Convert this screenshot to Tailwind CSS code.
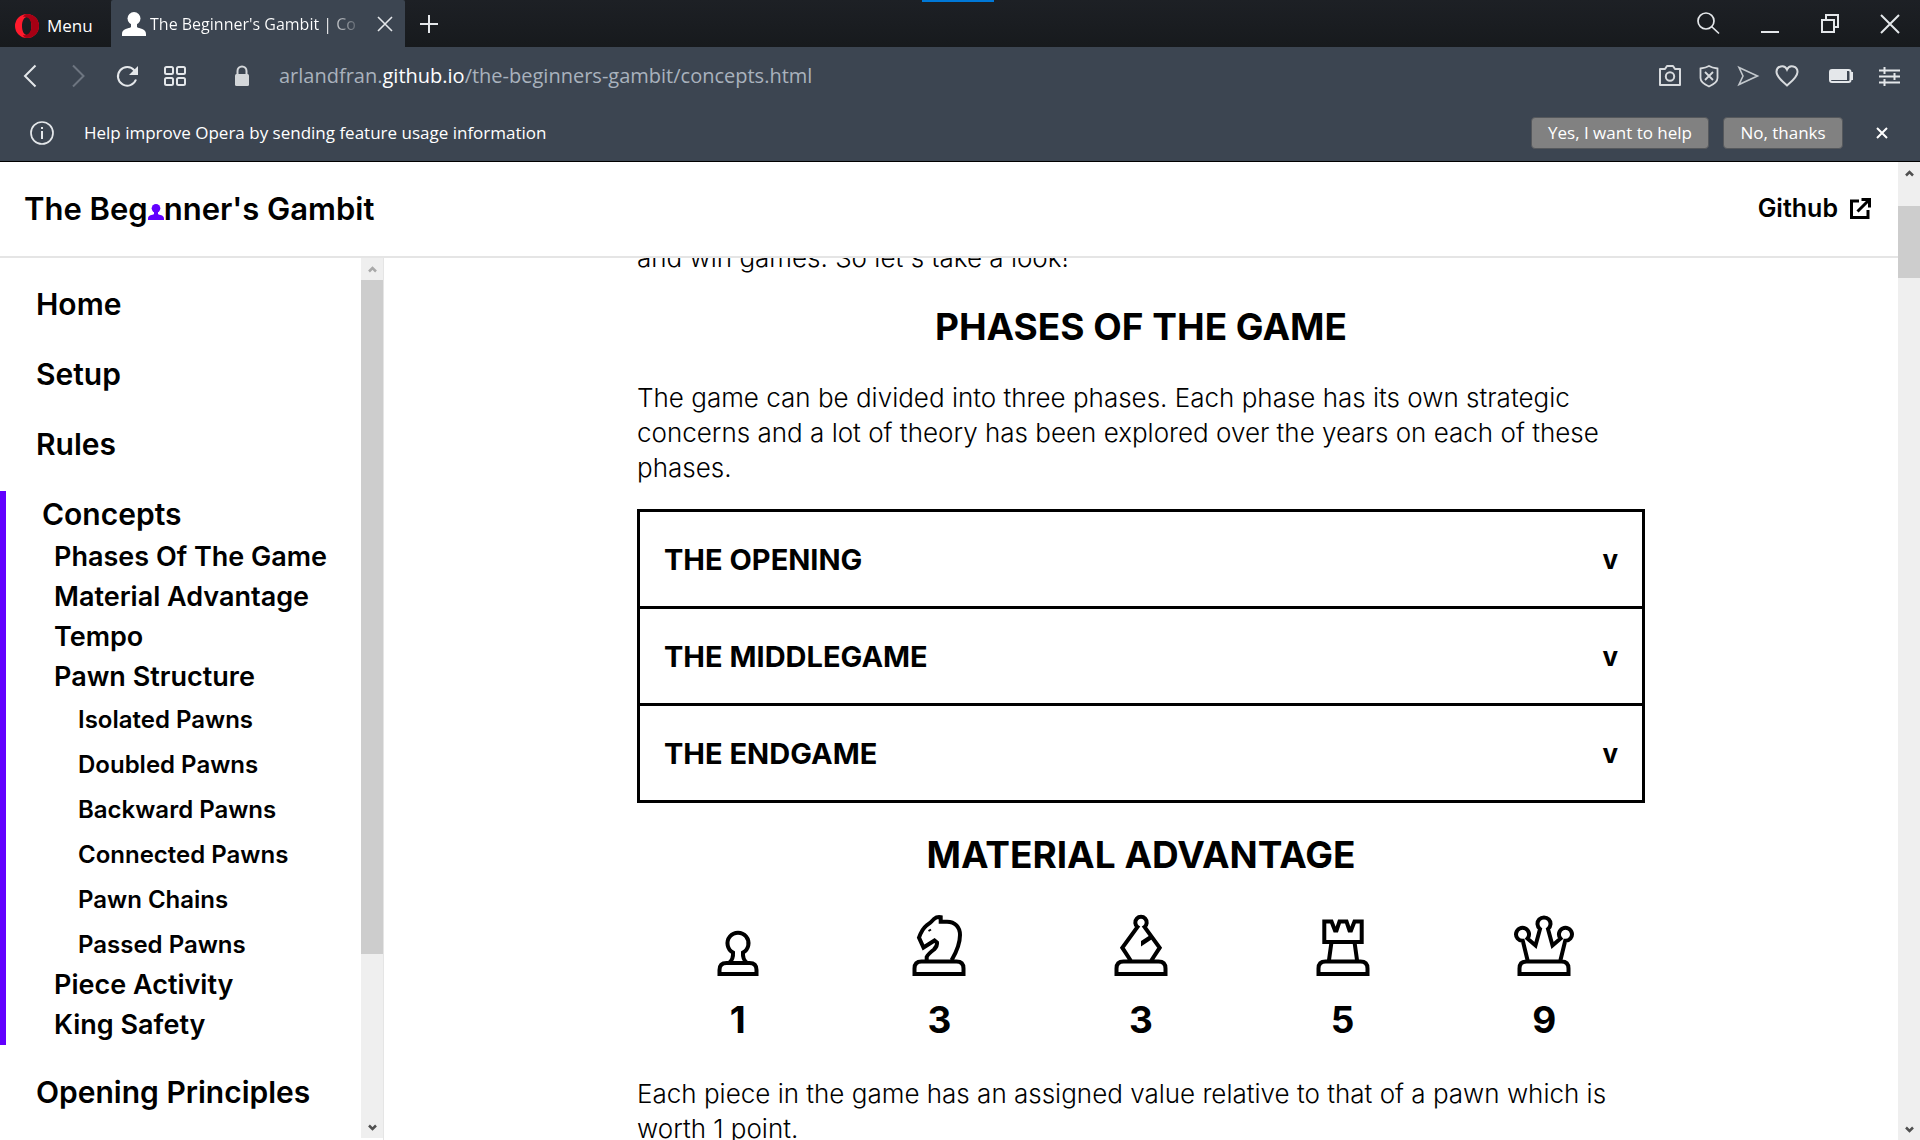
<!DOCTYPE html>
<html lang="en">
<head>
<meta charset="utf-8">
<title>The Beginner's Gambit | Concepts</title>
<script src="https://cdn.jsdelivr.net/npm/@tailwindcss/browser@4"></script>
</head>
<body class="flex h-screen flex-col overflow-hidden bg-white font-['Inter',sans-serif] text-black">

<!-- Browser chrome -->
<div class="shrink-0 border-b border-black bg-[#3c4551] font-['Open_Sans',sans-serif] text-white">
  <div class="relative flex h-[47px] items-stretch bg-linear-to-b from-[#1d2025] to-[#171a1d]">
    <div class="absolute top-0 left-[48%] h-[2px] w-[72px] bg-[#0078d7]"></div>
    <button class="flex w-[111px] items-center gap-2 pt-1 pl-[15px] text-[17px]">
      <svg class="size-6" viewBox="0 0 24 24"><path fill="#ff1b2d" fill-rule="evenodd" d="M12 0a12 12 0 1 0 0 24a12 12 0 1 0 0-24M12 3c3 0 4.500 4 4.500 9s-1.500 9-4.500 9s-5-4-5-9s2-9 5-9"/><path fill="#a70014" d="M12 0a12 12 0 0 1 0 24c-2 0-3-1-4-3c5 1 8.500-3 8.500-9s-3.500-10-8.500-9c1-2 2-3 4-3"/></svg>
      Menu
    </button>
    <div class="flex w-[294px] items-center rounded-t-xs bg-[#3c4551] pr-3 pl-[11px]">
      <svg class="size-6 shrink-0" viewBox="0 0 24 24" fill="#fff"><circle cx="12" cy="6.500" r="6.500"/><path d="M9 10h6v5c2 2 9 1 9 7v2H0v-2c0-6 7-5 9-7z"/></svg>
      <span class="ml-1 bg-linear-to-r from-white from-85% to-white/20 bg-clip-text text-[16px] whitespace-nowrap text-transparent">The Beginner's Gambit | Co</span>
      <button class="ml-auto" aria-label="Close tab"><svg class="size-4" viewBox="0 0 16 16" stroke="#e4e7ea" stroke-width="1.600"><path d="M1 1l14 14M15 1L1 15"/></svg></button>
    </div>
    <button class="ml-[14px] w-[20px]" aria-label="New tab"><svg class="size-5" viewBox="0 0 20 20" stroke="#e4e7ea" stroke-width="2"><path d="M10 1v18M1 10h18"/></svg></button>
    <div class="ml-auto flex items-center gap-[40px] pr-5">
      <button aria-label="Search tabs"><svg class="size-6" viewBox="0 0 24 24" fill="none" stroke="#e4e7ea" stroke-width="1.700"><circle cx="10" cy="9" r="8"/><path d="M15.500 14.500L23 21.500"/></svg></button>
      <button aria-label="Minimize"><svg class="size-[20px]" viewBox="0 0 20 20" stroke="#e4e7ea" stroke-width="2"><path d="M1 18h18"/></svg></button>
      <button aria-label="Restore"><svg class="size-[20px]" viewBox="0 0 20 20" fill="none" stroke="#e4e7ea" stroke-width="2"><path d="M2 6h12v12H2zM6 6V1h12v12h-4"/></svg></button>
      <button aria-label="Close"><svg class="size-[20px]" viewBox="0 0 20 20" stroke="#e4e7ea" stroke-width="2"><path d="M1 1l18 18M19 1L1 19"/></svg></button>
    </div>
  </div>

  <div class="flex h-[58px] items-center pr-[20px] pl-[22px]">
    <div class="flex items-center gap-[23px]">
      <button aria-label="Back"><svg class="size-6" viewBox="0 0 24 24" fill="none" stroke="#e4e7ea" stroke-width="2"><path d="M13.500 1.500L3 12l10.500 10.500"/></svg></button>
      <button aria-label="Forward"><svg class="size-6" viewBox="0 0 24 24" fill="none" stroke="#6d7580" stroke-width="2"><path d="M4 1.500L14.500 12L4 22.500"/></svg></button>
      <button aria-label="Reload"><svg class="size-6" viewBox="0 0 24 24" fill="none" stroke="#e4e7ea" stroke-width="2"><path d="M20 15.500A9.300 9.300 0 1 1 18.500 6.500"/><path fill="#e4e7ea" stroke="none" d="M22 2v9h-9z"/></svg></button>
      <button aria-label="Speed dial"><svg class="size-6" viewBox="0 0 24 24" fill="none" stroke="#e4e7ea" stroke-width="2"><rect x="2" y="3" width="8" height="7" rx="1.500"/><rect x="14" y="3" width="8" height="7" rx="1.500"/><rect x="2" y="14" width="8" height="7" rx="1.500"/><rect x="14" y="14" width="8" height="7" rx="1.500"/></svg></button>
    </div>
    <svg class="ml-[47px] h-[22px] w-[16px]" viewBox="0 0 16 22"><path fill="none" stroke="#d3d6d9" stroke-width="2" d="M3.500 11V6a4.500 4.500 0 0 1 9 0v5"/><rect x="1" y="9" width="14" height="12" rx="1.500" fill="#d3d6d9"/></svg>
    <a href="https://arlandfran.github.io/the-beginners-gambit/concepts.html" class="ml-[29px] text-[20px] text-[#a9b2bd]">arlandfran.<span class="text-white">github.io</span>/the-beginners-gambit/concepts.html</a>
    <div class="ml-auto flex items-center gap-[15px]">
      <button aria-label="Snapshot"><svg class="size-6" viewBox="0 0 24 24" fill="none" stroke="#d8dbde" stroke-width="2"><path d="M2 5h5l2-3h6l2 3h5v16H2z" stroke-linejoin="round"/><circle cx="12" cy="12.500" r="4.200"/></svg></button>
      <button aria-label="Ad blocker"><svg class="size-6" viewBox="0 0 24 24" fill="none" stroke="#d8dbde" stroke-width="1.800"><path d="M12 2c2.500 1.500 5 2 8.500 2.500V14c0 4-4 6.500-8.500 8.500C7.500 20.500 3.500 18 3.500 14V4.500C7 4 9.500 3.500 12 2zM8 8l8 8M16 8l-8 8"/></svg></button>
      <button aria-label="Send"><svg class="size-6" viewBox="0 0 24 24" fill="none" stroke="#c3c8cd" stroke-width="1.600"><path d="M3 3.500L21.500 12L3 20.500L7 12z"/></svg></button>
      <button aria-label="Bookmark"><svg class="size-6" viewBox="0 0 24 24" fill="none" stroke="#d8dbde" stroke-width="2"><path d="M12 21.500C8 18 1.500 13 1.500 8A5.500 5.500 0 0 1 12 5.500A5.500 5.500 0 0 1 22.500 8C22.500 13 16 18 12 21.500z"/></svg></button>
    </div>
    <button class="ml-[30px]" aria-label="Battery saver"><svg class="h-[16px] w-[24px]" viewBox="0 0 24 16"><rect x="1" y="2" width="20.500" height="12" rx="2" fill="none" stroke="#e4e7ea" stroke-width="2"/><path fill="#e4e7ea" d="M2 3h16v9H2zM22 4h2v8h-2z"/></svg></button>
    <button class="ml-[26px]" aria-label="Easy setup"><svg class="size-[21px]" viewBox="0 0 21 21" stroke="#e4e7ea" stroke-width="2"><path d="M0 4.500h21M0 10.500h21M0 16.500h21M5.500 1v7M15.500 7v7M5.500 13v7"/></svg></button>
  </div>

  <div class="flex h-[56px] items-center pr-[32px] pl-[30px] text-[17px]">
    <svg class="size-6" viewBox="0 0 24 24" fill="none" stroke="#e4e7ea" stroke-width="1.700"><circle cx="12" cy="12" r="11"/><path d="M12 10v8M12 6v2" stroke-width="2"/></svg>
    <p class="ml-[30px]">Help improve Opera by sending feature usage information</p>
    <button class="ml-auto h-8 w-[178px] rounded-sm border border-[#55585c] bg-[#818181]">Yes, I want to help</button>
    <button class="ml-[14px] h-8 w-[120px] rounded-sm border border-[#55585c] bg-[#818181]">No, thanks</button>
    <button class="ml-[33px]" aria-label="Dismiss"><svg class="size-[12px]" viewBox="0 0 12 12" stroke="#fff" stroke-width="2"><path d="M1 1l10 10M11 1L1 11"/></svg></button>
  </div>
</div>

<!-- Page viewport -->
<div class="flex min-h-0 flex-1">
  <div class="flex min-w-0 flex-1 flex-col">
    <header class="flex h-[96px] shrink-0 items-center justify-between border-b-2 border-[#e5e5e5] pr-[26px] pl-6 font-semibold">
      <a href="#" aria-label="The Beginner's Gambit" class="text-[31px]">The Beg<svg class="inline size-4 align-baseline" viewBox="0 0 24 24" fill="#6200ff"><circle cx="12" cy="6.500" r="6.500"/><path d="M9 10h6v5c2 2 9 1 9 7v2H0v-2c0-6 7-5 9-7z"/></svg>nner's Gambit</a>
      <a href="#" class="flex items-center gap-[10px] text-[25px]">Github
        <svg class="size-6" viewBox="0 0 24 24" fill="none" stroke="#000" stroke-width="3"><path d="M11 4H3.500V20.500H20V13M9.500 14.500L20 4"/><path fill="#000" stroke="none" d="M13.500 1H23v9.500h-3V4h-6.500z"/></svg></a>
    </header>

    <div class="flex min-h-0 flex-1">
      <nav class="flex w-[384px] shrink-0 border-r border-[#e5e5e5] font-semibold">
        <div class="flex-1 overflow-hidden pt-[11px]">
          <ul class="text-[30px] leading-[70px]">
            <li class="pl-9"><a href="#">Home</a></li>
            <li class="pl-9"><a href="#">Setup</a></li>
            <li class="pl-9"><a href="#">Rules</a></li>
            <li class="mt-3 border-l-6 border-[#6200ff] pl-9">
              <a href="#" class="block leading-[46px]">Concepts</a>
              <ul class="pl-3 text-[27px] leading-[40px]">
                <li><a href="#">Phases Of The Game</a></li>
                <li><a href="#">Material Advantage</a></li>
                <li><a href="#">Tempo</a></li>
                <li><a href="#">Pawn Structure</a>
                  <ul class="-mb-[2px] pl-6 text-[24px] leading-[45px]">
                    <li><a href="#">Isolated Pawns</a></li>
                    <li><a href="#">Doubled Pawns</a></li>
                    <li><a href="#">Backward Pawns</a></li>
                    <li><a href="#">Connected Pawns</a></li>
                    <li><a href="#">Pawn Chains</a></li>
                    <li><a href="#">Passed Pawns</a></li>
                  </ul>
                </li>
                <li><a href="#">Piece Activity</a></li>
                <li><a href="#">King Safety</a></li>
              </ul>
            </li>
            <li class="mt-3 pl-9"><a href="#">Opening Principles</a></li>
          </ul>
        </div>
        <div class="mb-[2px] flex w-[22px] flex-col items-center justify-between bg-[#efefef]">
          <svg class="h-[22px] w-[22px]" viewBox="0 0 22 22" fill="none" stroke="#a9a9a9" stroke-width="2.500"><path d="M8 13.500l3.500-3.500l3.500 3.500"/></svg>
          <div class="w-full flex-[674] bg-[#cdcdcd]"></div>
          <div class="flex-[162]"></div>
          <svg class="h-[22px] w-[22px]" viewBox="0 0 22 22" fill="none" stroke="#505050" stroke-width="2.500"><path d="M8 9.500l3.500 3.500l3.500-3.500"/></svg>
        </div>
      </nav>

      <main class="flex-1 overflow-hidden">
        <div class="mx-auto -mt-[18px] w-[1008px] text-[26px] leading-[35px] font-light">
          <p>and win games. So let's take a look!</p>
          <h2 class="mt-[25px] text-center text-[37px] leading-[54px] font-bold">PHASES OF THE GAME</h2>
          <p class="mt-[26px]">The game can be divided into three phases. Each phase has its own strategic concerns and a lot of theory has been explored over the years on each of these phases.</p>
          <div class="mt-[24px] divide-y-3 border-3 border-black text-[29px] font-bold">
            <details><summary class="flex h-[94px] cursor-pointer list-none items-center justify-between px-6">THE OPENING<span class="text-[26px]">v</span></summary></details>
            <details><summary class="flex h-[94px] cursor-pointer list-none items-center justify-between px-6">THE MIDDLEGAME<span class="text-[26px]">v</span></summary></details>
            <details><summary class="flex h-[94px] cursor-pointer list-none items-center justify-between px-6">THE ENDGAME<span class="text-[26px]">v</span></summary></details>
          </div>
          <h2 class="mt-[25px] text-center text-[37px] leading-[54px] font-bold">MATERIAL ADVANTAGE</h2>
          <div class="mt-[31px] grid grid-cols-5 justify-items-center text-[37px] leading-[54px] font-bold">
            <figure class="flex flex-col items-center gap-[16px]">
              <svg class="size-16" viewBox="0 0 64 64" fill="none" stroke="#000" stroke-width="4"><path d="M13.500 61V57Q13.500 50 20.500 50H43.500Q50.500 50 50.500 57V61ZM23.500 49.500Q27.500 46 27 39.500A10.500 10.500 0 1 1 37 39.500Q36.500 46 40.500 49.500"/></svg>
              <figcaption>1</figcaption>
            </figure>
            <figure class="flex flex-col items-center gap-[16px]">
              <svg class="size-16" viewBox="0 0 64 64" fill="none" stroke="#000" stroke-width="4"><path d="M7.500 61V55.500Q7.500 48.500 14.500 48.500H49.500Q56.500 48.500 56.500 55.500V61ZM19.700 47V44Q21 41 27 36.500Q30.500 33 30 29.500L27.500 27.500L16.500 34.500L12 24.700Q15 16 19.500 12.500Q23 10.500 27 6Q30 3.500 33.700 4.200V8.700H40C48 8.700 53 14 53 22Q53 33 44.700 47"/><path stroke-width="2" d="M21.500 18l2.500-1.500"/></svg>
              <figcaption>3</figcaption>
            </figure>
            <figure class="flex flex-col items-center gap-[16px]">
              <svg class="size-16" viewBox="0 0 64 64" fill="none" stroke="#000" stroke-width="4"><path d="M7.500 61V55.500Q7.500 48.500 14.500 48.500H49.500Q56.500 48.500 56.500 55.500V61ZM22 48L13.300 34.700L28.500 14A5.700 5.700 0 1 1 35.500 14L50.700 34.700L42 48"/><path fill="#000" stroke="none" d="M32 28l10-6.500l2 4l-12 8z"/></svg>
              <figcaption>3</figcaption>
            </figure>
            <figure class="flex flex-col items-center gap-[16px]">
              <svg class="size-16" viewBox="0 0 64 64" fill="none" stroke="#000" stroke-width="4"><path d="M7.500 61V55.500Q7.500 48.500 14.500 48.500H49.500Q56.500 48.500 56.500 55.500V61ZM13.300 8.500H20.500L24 17.500H25.500L28.500 8.500H35.500L38.500 17.500H40L43.500 8.500H50.700V29H13.300ZM20.500 29L18 47M43.500 29L46 47"/></svg>
              <figcaption>5</figcaption>
            </figure>
            <figure class="flex flex-col items-center gap-[16px]">
              <svg class="size-16" viewBox="0 0 64 64" fill="none" stroke="#000" stroke-width="4"><path d="M7.500 61V55.500Q7.500 48.500 14.500 48.500H49.500Q56.500 48.500 56.500 55.500V61ZM15.500 47L10.800 27.800A6.500 6.500 0 1 1 15.500 25.500L23.500 32.500L28 16A6.500 6.500 0 1 1 36 16L40.500 32.500L48.500 25.500A6.500 6.500 0 1 1 53.200 27.800L48.500 47"/></svg>
              <figcaption>9</figcaption>
            </figure>
          </div>
          <p class="mt-[29px]">Each piece in the game has an assigned value relative to that of a pawn which is worth 1 point.</p>
        </div>
      </main>
    </div>
  </div>

  <!-- Window scrollbar -->
  <div class="flex w-[22px] shrink-0 flex-col bg-[#efefef]">
    <svg class="h-[22px] w-[22px]" viewBox="0 0 22 22" fill="none" stroke="#505050" stroke-width="2.500"><path d="M8 13.500l3.500-3.500l3.500 3.500"/></svg>
    <div class="mt-[22px] h-[72px] bg-[#cdcdcd]"></div>
    <svg class="mt-auto h-[22px] w-[22px]" viewBox="0 0 22 22" fill="none" stroke="#505050" stroke-width="2.500"><path d="M8 9.500l3.500 3.500l3.500-3.500"/></svg>
  </div>
</div>
</body>
</html>
